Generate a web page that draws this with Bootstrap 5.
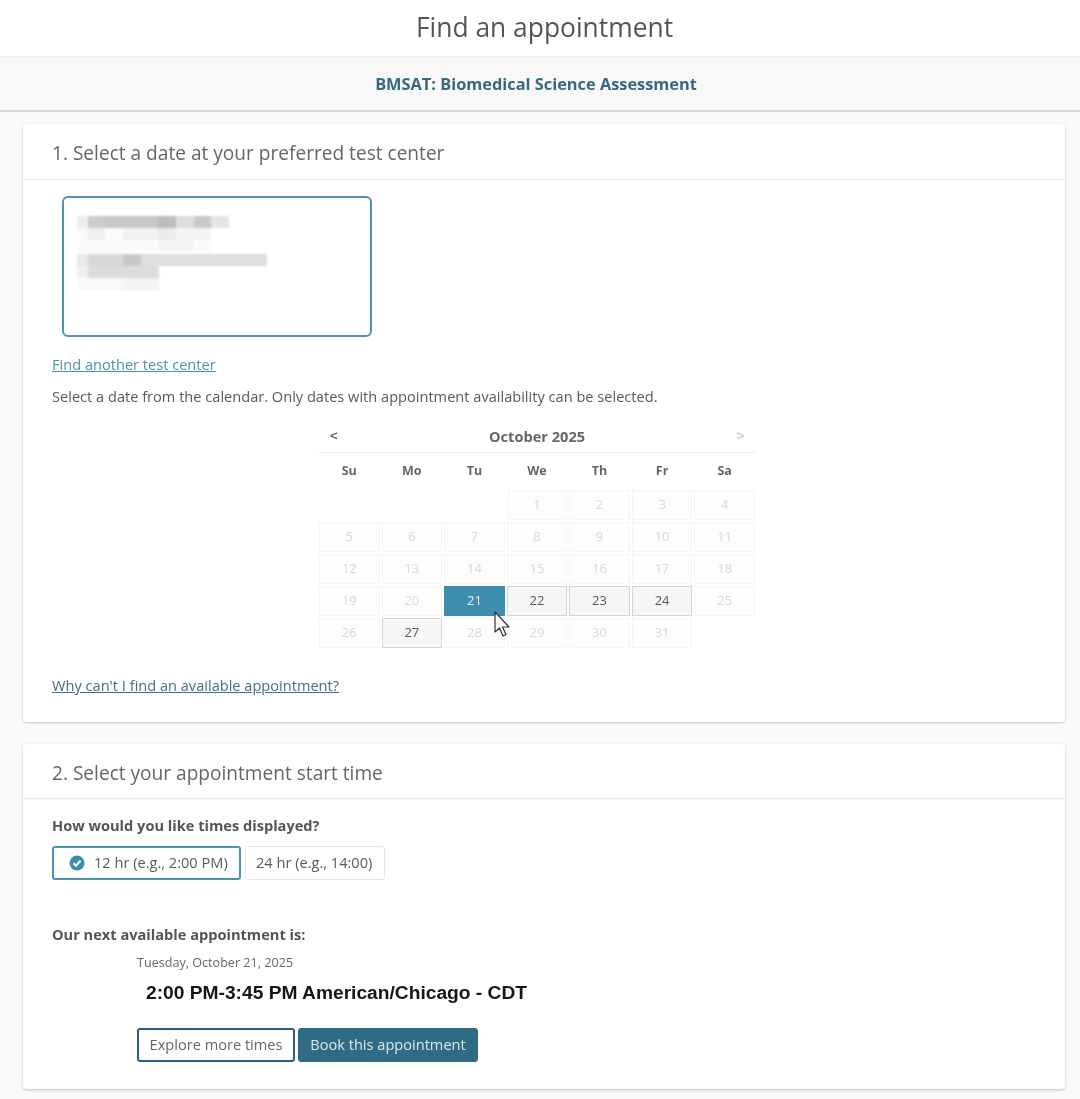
<!DOCTYPE html>
<html lang="en"><head><meta charset="utf-8"><title>Find an appointment</title>
<link href="https://cdn.jsdelivr.net/npm/bootstrap@5.3.0/dist/css/bootstrap.min.css" rel="stylesheet">
<style>
body{font-family:"Open Sans",sans-serif;background:#fafafa;color:#5a5a5a;font-size:14.6px;line-height:20px;height:1099px;overflow:hidden;filter:blur(.35px)}
.page-title{height:56px;background:#fff;font-size:26.4px;font-weight:400;line-height:54px;color:#555;text-align:center;margin:0;padding-left:9px}
.exam-bar{height:56px;background:#f8f8f8;border-top:1px solid #eee;border-bottom:2px solid #d8d8d8;color:#37687f;font-weight:700;font-size:16.35px;line-height:54px;text-align:center;padding-right:8px}
.sheet{margin:12px 15px 22px 23px;background:#fff;border:0;border-radius:4px;box-shadow:0 1px 3px rgba(0,0,0,.22)}
.sheet-head{height:56px;border-bottom:1px solid #eaeaea;padding:0 29px;font-size:19.1px;line-height:59px;color:#666}
.sheet-one{height:598px}
.sheet-two{height:345px;margin-bottom:0}
.sheet-two .sheet-head{height:55px;line-height:58px}
.sheet-body{padding:16px 29px 0}
.center-box{width:310px;height:141px;margin-left:10px;border:2px solid #4f94ab;border-radius:6px;padding-top:18px;padding-left:13px}
.center-box svg{display:block;filter:blur(1px)}
.teal-link{color:#4a93ad;text-decoration:underline}
.navy-link{color:#3c7188;text-decoration:underline}
.find-link{margin-top:17px;margin-bottom:12px;height:20px}
.cal{width:438px;margin:20px 0 0 266px}
.cal-head{height:27px;border-bottom:1px solid #eee;font-weight:700;color:#666;text-align:center;line-height:20px;padding:0 12px;font-size:14.6px}
.cal-head span{font-family:"Liberation Sans",sans-serif;font-weight:700;font-size:13px}
.cal-prev{color:#666}.cal-next{color:#ccc}
.cal-grid{display:grid;grid-template-columns:repeat(7,62.57px);grid-auto-rows:32px}
.dow{font-size:12.5px;font-weight:700;color:#666;text-align:center;height:36px;line-height:36px}
.cal-names{display:grid;grid-template-columns:repeat(7,62.57px)}
.day{margin:1px;border:1px solid #f5f5f5;background:#fdfdfd;color:#d8d8d8;font-size:13px;text-align:center;line-height:27px}
.day-on{background:#f6f6f6;border-color:#d4d4d4;color:#5a5a5a;font-weight:500}
.day-picked{background:#3e8fae;border-color:#3e8fae;color:#eef;font-weight:500}
.day-blank{background:none;border:0}
.cal-wrap{position:relative}
.pointer{position:absolute;left:175px;top:122px}
.why{margin-top:26px}
.lbl{font-weight:700;color:#555;line-height:20px}
.fmt{height:34px;border-radius:3px;background:#fff;color:#5a5a5a;display:flex;align-items:center;line-height:18px;padding-bottom:3px}
.fmt svg{margin-top:3px}
.fmt-on{width:189px;border:2px solid #4f94ab;padding-left:15px;gap:9px}
.fmt-off{width:140px;border:1px solid #e6e6e6;padding-left:10px}
.fmt-row{margin-top:11px}
.lbl-next{margin-top:44px}
.when{margin-left:85px}
.when-date{font-size:12.6px;color:#666;line-height:18px;margin-top:10px}
.when-time{font-family:"Liberation Sans",sans-serif;font-weight:700;font-size:19.2px;color:#151515;margin:9px 0 0 9px;line-height:24px}
.act{height:34px;font-size:14.6px;border-radius:3px;padding:0 0 2px;display:flex;align-items:center;justify-content:center}
.act-ghost{width:158px;border:2px solid #2d5f78;color:#666;background:#fff}
.act-solid{width:180px;border:1px solid #2f6b85;background:#2f6b85;color:#dfe9ee}
.act-row{margin-top:23px;gap:3px}
</style></head><body>
<h1 class="page-title">Find an appointment</h1>
<div class="exam-bar">BMSAT: Biomedical Science Assessment</div>
<section class="sheet sheet-one">
 <div class="sheet-head">1. Select a date at your preferred test center</div>
 <div class="sheet-body">
  <div class="center-box">
   <svg width="210" height="78" viewBox="0 0 200 78" preserveAspectRatio="none" shape-rendering="crispEdges">
    <g>
     <rect x="0" y="0" width="10" height="12" fill="#eee"/><rect x="10" y="0" width="17" height="12" fill="#ccc"/><rect x="27" y="0" width="50" height="12" fill="#c8c8c8"/><rect x="77" y="0" width="17" height="12" fill="#bdbdbd"/><rect x="94" y="0" width="17" height="12" fill="#ddd"/><rect x="111" y="0" width="17" height="12" fill="#c8c8c8"/><rect x="128" y="0" width="17" height="12" fill="#e4e4e4"/>
     <rect x="0" y="12" width="10" height="12" fill="#fafafa"/><rect x="10" y="12" width="17" height="12" fill="#efefef"/><rect x="27" y="12" width="17" height="12" fill="#fbfbfb"/><rect x="44" y="12" width="33" height="12" fill="#f1f1f1"/><rect x="77" y="12" width="17" height="12" fill="#ebebeb"/><rect x="94" y="12" width="34" height="12" fill="#f4f4f4"/>
     <rect x="0" y="24" width="128" height="12" fill="#fafafa"/><rect x="77" y="24" width="34" height="12" fill="#f5f5f5"/>
     <rect x="0" y="38" width="10" height="12" fill="#e8e8e8"/><rect x="10" y="38" width="34" height="12" fill="#d8d8d8"/><rect x="44" y="38" width="17" height="12" fill="#c8c8c8"/><rect x="61" y="38" width="120" height="12" fill="#dedede"/>
     <rect x="0" y="50" width="10" height="12" fill="#f0f0f0"/><rect x="10" y="50" width="68" height="12" fill="#dcdcdc"/>
     <rect x="0" y="62" width="78" height="12" fill="#f9f9f9"/><rect x="44" y="62" width="34" height="12" fill="#f4f4f4"/>
    </g>
   </svg>
  </div>
  <div class="find-link"><a class="teal-link" href="#">Find another test center</a></div>
  <div>Select a date from the calendar. Only dates with appointment availability can be selected.</div>
  <div class="cal">
   <div class="cal-head d-flex justify-content-between"><span class="cal-prev">&lt;</span><div>October 2025</div><span class="cal-next">&gt;</span></div>
   <div class="cal-names"><div class="dow">Su</div><div class="dow">Mo</div><div class="dow">Tu</div><div class="dow">We</div><div class="dow">Th</div><div class="dow">Fr</div><div class="dow">Sa</div></div>
   <div class="cal-wrap">
   <div class="cal-grid">
    <div class="day day-blank"></div><div class="day day-blank"></div><div class="day day-blank"></div><div class="day">1</div><div class="day">2</div><div class="day">3</div><div class="day">4</div>
    <div class="day">5</div><div class="day">6</div><div class="day">7</div><div class="day">8</div><div class="day">9</div><div class="day">10</div><div class="day">11</div>
    <div class="day">12</div><div class="day">13</div><div class="day">14</div><div class="day">15</div><div class="day">16</div><div class="day">17</div><div class="day">18</div>
    <div class="day">19</div><div class="day">20</div><div class="day day-picked">21</div><div class="day day-on">22</div><div class="day day-on">23</div><div class="day day-on">24</div><div class="day">25</div>
    <div class="day">26</div><div class="day day-on">27</div><div class="day">28</div><div class="day">29</div><div class="day">30</div><div class="day">31</div><div class="day day-blank"></div>
   </div>
   <svg class="pointer" width="20" height="28" viewBox="0 0 20 28"><path d="M2 1V21L6.500 17L10 25L13 23.500L9.500 16H16Z" fill="#fff" stroke="#333" stroke-width="1.200" stroke-linejoin="round"/></svg>
   </div>
  </div>
  <div class="why"><a class="navy-link" href="#">Why can't I find an available appointment?</a></div>
 </div>
</section>
<section class="sheet sheet-two">
 <div class="sheet-head">2. Select your appointment start time</div>
 <div class="sheet-body">
  <div class="lbl">How would you like times displayed?</div>
  <div class="d-flex gap-1 fmt-row">
   <div class="fmt fmt-on"><svg width="16" height="16" viewBox="0 0 16 16"><circle cx="8" cy="8" r="7.500" fill="#3e8fae"/><path d="M4.500 8.200L7 10.700L11.500 5.800" fill="none" stroke="#fff" stroke-width="2"/></svg><span>12 hr (e.g., 2:00 PM)</span></div>
   <div class="fmt fmt-off">24 hr (e.g., 14:00)</div>
  </div>
  <div class="lbl lbl-next">Our next available appointment is:</div>
  <div class="when">
   <div class="when-date">Tuesday, October 21, 2025</div>
   <div class="when-time">2:00 PM-3:45 PM American/Chicago - CDT</div>
   <div class="d-flex act-row">
    <button class="act act-ghost" type="button">Explore more times</button>
    <button class="act act-solid" type="button">Book this appointment</button>
   </div>
  </div>
 </div>
</section>
<script src="https://cdn.jsdelivr.net/npm/bootstrap@5.3.0/dist/js/bootstrap.bundle.min.js"></script>
</body></html>
